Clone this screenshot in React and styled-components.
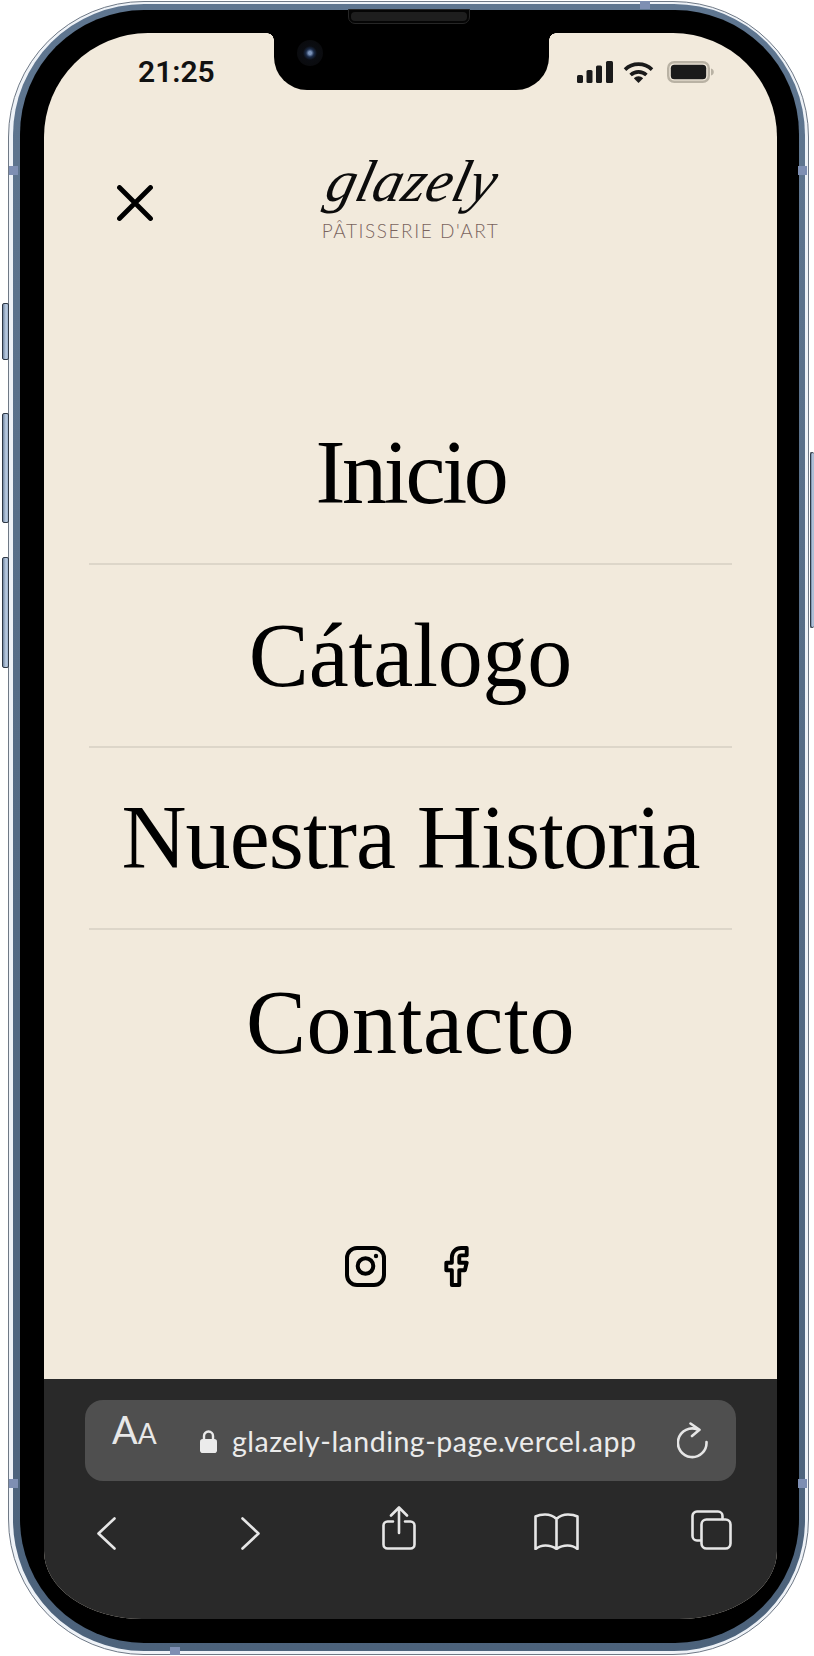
import React from "react";
import styled, { createGlobalStyle } from "styled-components";

const GlobalStyle = createGlobalStyle`
	html, body {
		margin: 0;
		padding: 0;
		background: #fff;
	}
	* { box-sizing: border-box; }
`;

const Page = styled.div`
	position: relative;
	width: 814px;
	height: 1656px;
	padding: 1px 5px 1px 8px;
	overflow: hidden;
`;

const Rim = styled.div`
	height: 100%;
	padding: 2px 3px 3px 4px;
	border: 1px solid #6f7986;
	border-radius: 136px;
	background: #eef2f7;
`;

const Band = styled.div`
	height: 100%;
	padding: 6px 6px 8px 7px;
	border-radius: 131px;
	background: linear-gradient(180deg, #5f7690 0%, #546b85 50%, #4c627b 100%);
`;

const Bezel = styled.div`
	height: 100%;
	padding: 23px 22px 24px 24px;
	border-radius: 124px;
	background: #000;
`;

const Screen = styled.main`
	display: flex;
	flex-direction: column;
	height: 100%;
	overflow: hidden;
	border-radius: 104px 104px 98px 98px / 104px 104px 68px 68px;
	background: #f2eadc;
`;

/* hardware bits that sit on top of the frame */
const SideButton = styled.div`
	position: absolute;
	top: ${(p) => p.$top}px;
	${(p) => (p.$right ? "right: 0;" : "left: 2px;")}
	width: ${(p) => (p.$right ? 4 : 7)}px;
	height: ${(p) => p.$height}px;
	border: 1px solid #2f3946;
	border-right-width: ${(p) => (p.$right ? 0 : 1)}px;
	border-radius: 2px;
	background: linear-gradient(90deg, #6f84a0, #bccde2 60%, #9fb3cd);
`;

const AntennaMark = styled.div`
	position: absolute;
	background: #7e8fb3;
	${(p) =>
		p.$axis === "x"
			? `left: ${p.$at}px; ${p.$edge}: 1px; width: 10px; height: 8px;`
			: `top: ${p.$at}px; ${p.$edge}: ${p.$edge === "left" ? 9 : 7}px; width: 9px; height: 9px;`}
`;

const Speaker = styled.div`
	position: absolute;
	top: 9px;
	left: 348px;
	width: 122px;
	height: 15px;
	padding: 2px;
	border: 1px solid #262626;
	border-radius: 0 0 7px 7px;
	background: #050505;

	&::after {
		content: "";
		display: block;
		height: 100%;
		border-radius: 4px;
		background: #1e1e1e;
	}
`;

const StatusBar = styled.header`
	display: flex;
	flex: none;
	height: 57px;
`;

const StatusTime = styled.div`
	width: 230px;
	padding: 24px 0 0 94px;
	font-family: Roboto, "Liberation Sans", sans-serif;
	font-size: 30px;
	font-weight: 600;
	line-height: 30px;
	color: #111;
`;

const Notch = styled.div`
	position: relative;
	flex: none;
	width: 275px;
	height: 57px;
	border-radius: 0 0 33px 33px;
	background: #000;

	&::before, &::after {
		content: "";
		position: absolute;
		top: 0;
		width: 7px;
		height: 7px;
	}
	&::before {
		left: -7px;
		background: radial-gradient(circle at 0 100%, transparent 6.5px, #000 7px);
	}
	&::after {
		right: -7px;
		background: radial-gradient(circle at 100% 100%, transparent 6.5px, #000 7px);
	}
`;

const Camera = styled.div`
	position: absolute;
	top: 7px;
	left: 23px;
	width: 26px;
	height: 26px;
	border-radius: 50%;
	background: radial-gradient(circle, #7a92b8 0 1.5px, #1b2b48 4px, #0b0d12 7px, #0a0b0e 13px);
`;

const StatusIcons = styled.div`
	display: flex;
	flex: 1;
	align-items: flex-start;
	gap: 10px;
	padding: 28px 0 0 28px;

	svg { display: block; }
`;

const TopRow = styled.div`
	display: grid;
	flex: none;
	grid-template-columns: 1fr auto 1fr;
	height: 150px;
	padding-top: 68px;
`;

const CloseButton = styled.button`
	align-self: start;
	width: 36px;
	height: 36px;
	margin: 27px 0 0 73px;
	padding: 0;
	border: 0;
	background: none;

	svg { display: block; }
`;

const Logo = styled.div`
	display: flex;
	flex-direction: column;
	align-items: center;
`;

const LogoScript = styled.div`
	height: 62px;
	font-family: "Liberation Serif", serif;
	font-size: 59px;
	font-style: italic;
	line-height: 46px;
	letter-spacing: 0.3px;
	color: #0c0c0c;
	transform: skewX(-14deg);
`;

const LogoTagline = styled.div`
	font-family: Lato, "Liberation Sans", sans-serif;
	font-size: 19px;
	font-weight: 300;
	line-height: 22px;
	letter-spacing: 1.55px;
	white-space: nowrap;
	color: #7a645e;
`;

const Menu = styled.nav`
	flex: none;
	margin: 142.5px 45px 0;
`;

const MenuRow = styled.a`
	display: flex;
	align-items: flex-end;
	justify-content: center;
	height: 182.5px;
	padding-bottom: 40px;
	border-bottom: ${(p) => (p.$last ? "0" : "2px solid #ddd6c9")};
	font-family: "Liberation Serif", serif;
	font-size: 90px;
	line-height: 100px;
	letter-spacing: ${(p) => p.$tracking}px;
	white-space: nowrap;
	color: #000;
`;

const Socials = styled.div`
	display: flex;
	flex: none;
	justify-content: center;
	gap: 58px;
	height: 41px;
	margin-top: 133px;
	padding-right: 7px;

	svg { display: block; }
`;

const BrowserBar = styled.section`
	flex: none;
	height: 240px;
	margin-top: auto;
	padding: 21px 41px 0;
	background: #292929;
`;

const AddressBar = styled.div`
	display: flex;
	align-items: center;
	height: 81px;
	padding-left: 27px;
	border-radius: 18px;
	background: #4f4f4f;
	color: #ebebeb;
`;

const ReaderButton = styled.div`
	flex: none;
	width: 88px;
	margin-top: -19px;
	font-family: Lato, "Liberation Sans", sans-serif;
	font-weight: 400;
	font-size: 38px;
	line-height: 38px;
	white-space: nowrap;
	color: #e8e8e8;

	span { font-size: 28px; }
`;

const Url = styled.div`
	flex: none;
	width: 460px;
	padding-left: 15px;
	font-family: Lato, "Liberation Sans", sans-serif;
	font-size: 28.5px;
	line-height: 34px;
	letter-spacing: 0.5px;
	white-space: nowrap;
`;

const Toolbar = styled.div`
	display: grid;
	grid-template-columns: 144px 141px 152px 157px auto;
	align-items: end;
	height: 69px;
	margin: 0 -4px 0 12px;

	svg { display: block; }
`;

const Stroke = styled.svg`
	fill: none;
	stroke: #e6e6e6;
	stroke-width: 2.6;
	stroke-linecap: round;
	stroke-linejoin: round;
`;

const DarkStroke = styled.svg`
	fill: none;
	stroke: #000;
	stroke-linecap: round;
	stroke-linejoin: round;
`;

const menuItems = [
	{ label: "Inicio", tracking: -3.3 },
	{ label: "Cátalogo", tracking: -0.2 },
	{ label: "Nuestra Historia", tracking: -0.9 },
	{ label: "Contacto", tracking: 0.5 },
];

export default function App() {
	return (
		<>
			<GlobalStyle />
			<Page>
				<Rim>
					<Band>
						<Bezel>
							<Screen>
								<StatusBar>
									<StatusTime>21:25</StatusTime>
									<Notch>
										<Camera />
									</Notch>
									<StatusIcons>
										<svg width="36" height="22" viewBox="0 0 36 22" fill="#1a1a1a">
											<rect x="0" y="14" width="6" height="8" rx="1.5" />
											<rect x="9.5" y="9" width="6" height="13" rx="1.5" />
											<rect x="19" y="4.5" width="6" height="17.5" rx="1.5" />
											<rect x="29" y="0" width="7" height="22" rx="1.5" />
										</svg>
										<svg width="31" height="22" viewBox="0 0 31 22">
											<g fill="none" stroke="#1a1a1a" strokeWidth="3.6">
												<path d="M2 8.6A19.5 19.5 0 0 1 29 8.6" />
												<path d="M7.6 14A11.6 11.6 0 0 1 23.4 14" />
											</g>
											<path d="M15.5 22 10.8 17.2A6.8 6.8 0 0 1 20.2 17.2Z" fill="#1a1a1a" />
										</svg>
										<svg width="47" height="22" viewBox="0 0 47 22" style={{ marginLeft: 3 }}>
											<rect x="1.2" y="1.2" width="40.6" height="19.6" rx="6" fill="none" stroke="#b9b2a4" strokeWidth="2.4" />
											<rect x="3.8" y="3.8" width="35.4" height="14.4" rx="3.5" fill="#1a1a1a" />
											<path d="M44 7.5c1.8.5 2.8 1.8 2.8 3.5s-1 3-2.8 3.5Z" fill="#b9b2a4" />
										</svg>
									</StatusIcons>
								</StatusBar>

								<TopRow>
									<CloseButton aria-label="Cerrar">
										<DarkStroke width="36" height="36" viewBox="0 0 36 36" strokeWidth="4.8">
											<path d="M2.5 2.5 33.5 33.5M33.5 2.5 2.5 33.5" />
										</DarkStroke>
									</CloseButton>
									<Logo>
										<LogoScript>glazely</LogoScript>
										<LogoTagline>PÂTISSERIE D'ART</LogoTagline>
									</Logo>
								</TopRow>

								<Menu>
									{menuItems.map((item, index) => (
										<MenuRow key={item.label} $tracking={item.tracking} $last={index === menuItems.length - 1}>
											{item.label}
										</MenuRow>
									))}
								</Menu>

								<Socials>
									<DarkStroke width="41" height="41" viewBox="0 0 41 41" strokeWidth="4">
										<rect x="2" y="2" width="37" height="37" rx="10" />
										<circle cx="20.5" cy="20" r="7.8" />
										<circle cx="31" cy="10" r="2.2" fill="#000" stroke="none" />
									</DarkStroke>
									<DarkStroke width="25" height="41" viewBox="5.9 0.95 13.2 22.1" strokeWidth="2.1">
										<path d="M18 2h-3a5 5 0 0 0-5 5v3H7v4h3v8h4v-8h3l1-4h-4V7a1 1 0 0 1 1-1h3z" />
									</DarkStroke>
								</Socials>

								<BrowserBar>
									<AddressBar>
										<ReaderButton>A<span>A</span></ReaderButton>
										<svg width="17" height="24" viewBox="0 0 17 24" style={{ flex: "none" }}>
											<path d="M4 11V7a4.5 4.5 0 0 1 9 0v4" fill="none" stroke="#ebebeb" strokeWidth="2.4" />
											<rect x="0" y="10" width="17" height="14" rx="2.8" fill="#ebebeb" />
										</svg>
										<Url>glazely-landing-page.vercel.app</Url>
										<Stroke width="31" height="37" viewBox="0 0 31 37" style={{ flex: "none" }}>
											<path d="M21 7.7A14.3 14.3 0 1 0 29.5 20" />
											<path d="M13.5 1.5 22.5 7.8 15 14" />
										</Stroke>
									</AddressBar>
									<Toolbar>
										<Stroke width="19" height="33" viewBox="0 0 19 33">
											<path d="M17.5 1.5 1.5 16.5 17.5 31.5" />
										</Stroke>
										<Stroke width="19" height="33" viewBox="0 0 19 33">
											<path d="M1.5 1.5 17.5 16.5 1.5 31.5" />
										</Stroke>
										<Stroke width="34" height="44" viewBox="0 0 34 44">
											<path d="M11 15.5H5.5a4 4 0 0 0-4 4V38.5a4 4 0 0 0 4 4H28.5a4 4 0 0 0 4-4V19.5a4 4 0 0 0-4-4H23" />
											<path d="M17 27V2M9 9.5 17 1.5 25 9.5" />
										</Stroke>
										<Stroke width="45" height="37" viewBox="0 0 45 37">
											<path d="M22.5 6C19 2.5 15 1.5 11 1.5 7.5 1.5 4 2.2 1.5 3.5V36C4 34 8 32.5 11.5 32.5 15.5 32.5 19 33.5 22.5 36 26 33.5 29.5 32.5 33.5 32.5 37 32.5 41 34 43.5 36V3.5C41 2.2 37.5 1.5 34 1.5 30 1.5 26 2.5 22.5 6ZM22.5 6V36" />
										</Stroke>
										<Stroke width="41" height="40" viewBox="0 0 41 40">
											<rect x="10.5" y="9.5" width="29" height="29" rx="5" />
											<path d="M9.5 30.5H6A4.5 4.5 0 0 1 1.5 26V6A4.5 4.5 0 0 1 6 1.5H27A4.5 4.5 0 0 1 31.5 6V9" />
										</Stroke>
									</Toolbar>
								</BrowserBar>
							</Screen>
						</Bezel>
					</Band>
				</Rim>

				<Speaker />
				<SideButton $top={303} $height={57} />
				<SideButton $top={413} $height={110} />
				<SideButton $top={557} $height={111} />
				<SideButton $right $top={452} $height={176} />
				<AntennaMark $axis="y" $edge="left" $at={166} />
				<AntennaMark $axis="y" $edge="left" $at={1479} />
				<AntennaMark $axis="y" $edge="right" $at={166} />
				<AntennaMark $axis="y" $edge="right" $at={1479} />
				<AntennaMark $axis="x" $edge="top" $at={640} />
				<AntennaMark $axis="x" $edge="bottom" $at={170} />
			</Page>
		</>
	);
}
